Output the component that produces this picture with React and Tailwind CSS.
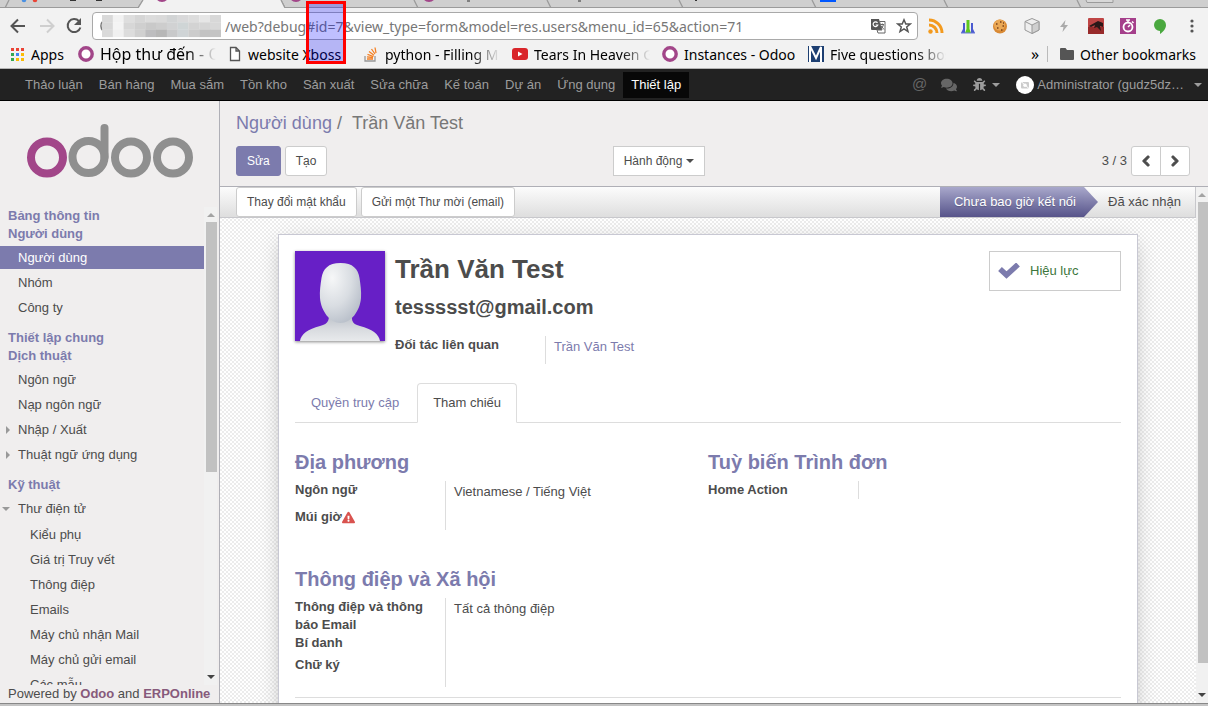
import React, { useState } from 'react';
import clsx from 'clsx';
import { FaBug, FaComments, FaExclamationTriangle, FaChevronLeft, FaChevronRight } from 'react-icons/fa';

const NAV_ITEMS = ['Thảo luận', 'Bán hàng', 'Mua sắm', 'Tồn kho', 'Sản xuất', 'Sửa chữa', 'Kế toán', 'Dự án', 'Ứng dụng', 'Thiết lập'];

const MENU = [
    { title: 'Bảng thông tin', items: [] },
    { title: 'Người dùng', items: [{ label: 'Người dùng', active: true }, { label: 'Nhóm' }, { label: 'Công ty' }] },
    { title: 'Thiết lập chung', items: [] },
    {
        title: 'Dịch thuật',
        items: [{ label: 'Ngôn ngữ' }, { label: 'Nạp ngôn ngữ' }, { label: 'Nhập / Xuất', toggle: 'closed' }, { label: 'Thuật ngữ ứng dụng', toggle: 'closed' }],
    },
    {
        title: 'Kỹ thuật',
        items: [
            {
                label: 'Thư điện tử',
                toggle: 'open',
                children: ['Kiểu phụ', 'Giá trị Truy vết', 'Thông điệp', 'Emails', 'Máy chủ nhận Mail', 'Máy chủ gửi email', 'Các mẫu'],
            },
        ],
    },
];

const MOSAIC = [
    ['#d9d9d9', '#f2f2f2', '#dedede', '#d6d6d6', '#dcdcdc', '#dadada', '#d2d4d5', '#d9d9da', '#dddddd', '#e6e6e6', '#d8d8d8'],
    ['#d8d8d8', '#f4f4f4', '#d7d7d7', '#cfcfcf', '#c9c9c9', '#cdcdcd', '#d1d2d3', '#cfd5d6', '#d3d3d3', '#d5d5d5', '#d8d8d8'],
    ['#dadada', '#f0f0f0', '#dcdcdc', '#d0d0d0', '#bdbdbf', '#b7b7b7', '#c8c9ca', '#cfd4d6', '#cccccc', '#c3c3c3', '#c4c4c4'],
];

function TabStrip() {
    return (
        <svg className="block h-2 w-full shrink-0" viewBox="0 0 1208 8" preserveAspectRatio="none" aria-hidden="true">
            <rect width="1208" height="8" fill="#cfcfcf" />
            <path d="M0 7.5H138L143 0H281L285 7.5H1208" fill="none" stroke="#9b9b9b" />
            <path d="M138 8L143 0H281L285 8Z" fill="#f2f2f2" />
            <path d="M5 8L9 0M138 8L143 0M281 0L285 8M414 0L418 8M547 0L551 8M679 0L683 8M812 0L816 8M944 0L948 8M1077 0L1081 8" fill="none" stroke="#9b9b9b" strokeWidth="1.3" />
            <circle cx="24" cy="0" r="2.3" fill="#4a90e2" />
            <circle cx="35" cy="0" r="2.3" fill="#ea4335" />
            <circle cx="162" cy="-5" r="7" fill="#a24689" />
            <circle cx="296" cy="-5" r="7" fill="#a24689" />
            <circle cx="429" cy="-5" r="7" fill="#a24689" />
            <path d="M70 .5H76M96 .5H102M467 1H470M578 1H581M695 .5H697" stroke="#333" />
            <rect x="820" width="16" height="2" fill="#0057ff" />
            <path d="M1086 0L1087 2.5H1113V0" fill="#d8d8d8" stroke="#9b9b9b" />
        </svg>
    );
}

function OdooRing() {
    return (
        <svg className="size-4 shrink-0" viewBox="0 0 16 16">
            <circle cx="8" cy="8" r="6.2" fill="#fff" stroke="#a24689" strokeWidth="3.4" />
        </svg>
    );
}

function AddressBar() {
    return (
        <div className="flex h-9 items-center pr-2 pl-2">
            <div className="flex w-21 shrink-0 items-center gap-3">
                <button aria-label="Back">
                    <svg className="size-5" viewBox="0 0 20 20" fill="none" stroke="#555" strokeWidth="2"><path d="M17 10H4M10 3.5L3.5 10L10 16.5" /></svg>
                </button>
                <button aria-label="Forward">
                    <svg className="size-5" viewBox="0 0 20 20" fill="none" stroke="#cfcfcf" strokeWidth="2"><path d="M0 10H13M7 3.5L13.500 10L7 16.500" /></svg>
                </button>
                <button aria-label="Reload" className="-ml-2">
                    <svg className="size-5" viewBox="0 0 20 20" fill="none" stroke="#555" strokeWidth="2">
                        <path d="M15 5.200A6.500 6.500 0 1 0 16.400 11.500" />
                        <path d="M17 2V9H10Z" fill="#555" stroke="none" />
                    </svg>
                </button>
            </div>
            <div className="flex h-7 min-w-0 flex-1 items-center rounded-sm border border-[#a9a9a9] bg-white pr-1.5">
                <svg className="h-6 w-32 shrink-0" viewBox="0 0 128 24">
                    <path d="M10 7A7 7 0 0 0 10 17" fill="none" stroke="#777" strokeWidth="1.5" />
                    {MOSAIC.map((row, y) =>
                        row.map((color, x) => <rect key={x + '-' + y} x={9 + x * 10.8} y={1 + y * 7.3} width="11" height="7.500" fill={color} />)
                    )}
                </svg>
                <input
                    aria-label="Address"
                    className="min-w-0 flex-1 bg-transparent pl-1 font-['Noto_Sans',sans-serif] text-[14px] text-[#777] outline-none"
                    defaultValue="/web?debug#id=7&view_type=form&model=res.users&menu_id=65&action=71"
                />
                <button aria-label="Translate" className="mr-2.5">
                    <svg className="size-4" viewBox="0 0 16 16">
                        <path d="M1 1H9L12 12H2A1 1 0 0 1 1 11Z" fill="#555" />
                        <path d="M9.500 3.500H15V15H8L7 12H12Z" fill="#fff" stroke="#666" />
                        <path d="M7.500 4.800A2.400 2.400 0 1 0 7.800 7H5.600" fill="none" stroke="#fff" strokeWidth="1.200" />
                        <path d="M10.500 6.500H14M12.300 5.500V6.500M13.500 6.500Q13 9.500 10.500 11M11.200 8L14 11.500" fill="none" stroke="#666" />
                    </svg>
                </button>
                <button aria-label="Bookmark" className="-mr-px">
                    <svg className="size-4" viewBox="0 0 16 16" fill="none" stroke="#555" strokeWidth="1.500">
                        <path d="M8 1.800L9.800 6H14.300L10.700 8.900L12 13.600L8 10.900L4 13.600L5.300 8.900L1.700 6H6.200Z" />
                    </svg>
                </button>
            </div>
            <Extensions />
        </div>
    );
}

function Extensions() {
    return (
        <div className="flex shrink-0 items-center gap-4 pl-2.5">
            <svg className="size-4" viewBox="0 0 16 16" fill="none" stroke="#f39a1e" strokeWidth="3">
                <circle cx="2.500" cy="13.500" r="2.200" fill="#f39a1e" stroke="none" />
                <path d="M1 7A8 8 0 0 1 9 15M1 2A13 13 0 0 1 14 15" />
            </svg>
            <svg className="size-4" viewBox="0 0 16 16">
                <path d="M1 15L3 11V5H5V15ZM11 15V5H13V11L15 15Z" fill="#4a5ad0" />
                <path d="M5 15L6.500 11V2H9.500V11L11 15Z" fill="#5fc81e" />
                <path d="M1 15H15" stroke="#6a78d8" />
            </svg>
            <svg className="size-4" viewBox="0 0 16 16">
                <circle cx="8" cy="8.500" r="7" fill="#d98a35" />
                <circle cx="7.500" cy="7" r="5.500" fill="#eaa855" />
                <path d="M4 6H5.500M8 4H9.500M10.500 8H12M5 10H6.500M9 12H10.500M11 5H12" stroke="#7a4018" strokeWidth="1.500" />
            </svg>
            <svg className="size-4" viewBox="0 0 16 16" stroke="#999" strokeLinejoin="round">
                <path d="M8 .5L15 3.500V12L8 15.500L1 12V3.500Z" fill="#eee" />
                <path d="M8 7L15 3.500V12L8 15.500Z" fill="#cfcfcf" />
                <path d="M1 3.500L8 7" fill="none" />
            </svg>
            <svg className="size-4" viewBox="0 0 16 16"><path d="M9.500 2L4 9H7.500L6.500 14L12 7H8.500Z" fill="#aaa" /></svg>
            <svg className="size-4" viewBox="0 0 16 16">
                <rect width="16" height="16" rx="1" fill="#bf4545" />
                <rect y="9" width="16" height="7" fill="#982b2b" />
                <path d="M1 8L10 3L15 5V9L12 8L13 13L9 9L6 10L7 7L3 9Z" fill="#2b1818" />
            </svg>
            <svg className="size-4" viewBox="0 0 16 16">
                <rect width="16" height="16" fill="#a5408b" />
                <circle cx="8" cy="9" r="4.500" fill="none" stroke="#fff" strokeWidth="1.800" />
                <path d="M6 2H10M8 2V4M12 3.500L13.500 5M8 9L10 7" stroke="#fff" strokeWidth="1.500" />
            </svg>
            <svg className="size-4" viewBox="0 0 16 16"><path d="M8 1A6 6 0 0 1 14 7C14 11 11 14 8 16V13A6 6 0 0 1 8 1Z" fill="#4aa83f" /></svg>
            <button aria-label="Menu">
                <svg className="size-4" viewBox="0 0 16 16" fill="#555">
                    <circle cx="8" cy="3" r="1.600" /><circle cx="8" cy="8" r="1.600" /><circle cx="8" cy="13" r="1.600" />
                </svg>
            </button>
        </div>
    );
}

function Bookmark({ icon, label, className, fade }) {
    return (
        <a href="#" className={clsx('flex shrink-0 items-center gap-1.5', className)}>
            {icon}
            <span className={clsx('overflow-hidden whitespace-nowrap', fade && 'mask-r-from-75%')}>{label}</span>
        </a>
    );
}

function BookmarksBar() {
    return (
        <div className="flex h-[25px] items-center border-b border-[#b5b5b5] pr-3 pb-1 pl-[9px] font-['Noto_Sans',sans-serif] text-[14px] text-black">
            <Bookmark
                className="w-[69px]"
                label="Apps"
                icon={
                    <svg className="size-4 shrink-0" viewBox="0 0 16 16">
                        {['#ea4335', '#ea4335', '#ea4335', '#34a853', '#4285f4', '#fbbc05', '#34a853', '#fbbc05', '#fbbc05'].map((c, i) => (
                            <rect key={i} x={2 + (i % 3) * 5} y={2 + Math.floor(i / 3) * 5} width="3" height="3" fill={c} />
                        ))}
                    </svg>
                }
            />
            <Bookmark className="w-[138px] text-[16px]" fade label="Hộp thư đến - Odoo" icon={<OdooRing />} />
            <Bookmark
                className="mx-3 w-[123px]"
                label="website Xboss"
                icon={
                    <svg className="h-4 w-3.5 shrink-0" viewBox="0 0 14 16" fill="#fff" stroke="#555" strokeWidth="1.300">
                        <path d="M2.500 1.500H8L11.500 5V14.500H2.500ZM8 1.500V5H11.500" />
                    </svg>
                }
            />
            <Bookmark
                className="w-[137px]"
                fade
                label="python - Filling Missing"
                icon={
                    <svg className="size-4 shrink-0" viewBox="0 0 16 16" fill="none">
                        <path d="M2 10V15H12V10" stroke="#999" strokeWidth="1.300" />
                        <path d="M4 13H10M4 10.800L10 11.500M4.500 8.300L10.500 10.500M6 5.500L11 9.300M8.500 3L12 8M12 1.500L13 7" stroke="#f48024" strokeWidth="1.300" />
                    </svg>
                }
            />
            <Bookmark
                className="ml-3 w-[138px]"
                fade
                label="Tears In Heaven Guitar"
                icon={
                    <svg className="size-4 shrink-0" viewBox="0 0 16 16">
                        <rect y="2" width="16" height="12" rx="3" fill="#d9252a" />
                        <path d="M6 5.500V10.500L10.500 8Z" fill="#fff" />
                    </svg>
                }
            />
            <Bookmark className="ml-3 w-[136px]" label="Instances - Odoo" icon={<OdooRing />} />
            <Bookmark
                className="ml-2.5 w-[138px]"
                fade
                label="Five questions bosses"
                icon={
                    <svg className="size-4 shrink-0" viewBox="0 0 16 16">
                        <rect width="16" height="16" fill="#1d3f72" />
                        <path d="M2 16V0L8 12L13 1V16" fill="none" stroke="#fff" strokeWidth="2" />
                    </svg>
                }
            />
            <button className="ml-auto text-[16px]" aria-label="More bookmarks">»</button>
            <div className="mr-3 ml-2 h-4 w-px bg-[#bbb]" />
            <Bookmark
                label="Other bookmarks"
                icon={<svg className="h-4 w-3.5 shrink-0" viewBox="0 0 14 16"><path d="M0 3Q0 2 1 2H5.500L7 4H13Q14 4 14 5V13Q14 14 13 14H1Q0 14 0 13Z" fill="#555" /></svg>}
            />
        </div>
    );
}

function Navbar() {
    return (
        <nav className="flex h-8 shrink-0 items-center border-b border-black bg-[#222] pr-1.5 pl-[17px] text-[13px] text-[#9d9d9d]">
            {NAV_ITEMS.map((item) => (
                <a
                    key={item}
                    href="#"
                    className={clsx('px-2 py-1 leading-[18px] whitespace-nowrap', item === 'Thiết lập' && 'bg-[#080808] text-white')}
                >
                    {item}
                </a>
            ))}
            <div className="ml-auto flex items-center">
                <a href="#" className="mr-3.5 text-[15px] text-[#666]" aria-label="Mentions">@</a>
                <a href="#" className="mr-4 text-[#666]" aria-label="Messages"><FaComments size={16} /></a>
                <a href="#" className="mr-4 flex items-center gap-1.5" aria-label="Debug">
                    <FaBug size={13} />
                    <Caret />
                </a>
                <a href="#" className="flex items-center">
                    <svg className="mr-[3px] size-4.5" viewBox="0 0 18 18">
                        <circle cx="9" cy="9" r="9" fill="#fff" />
                        <rect x="5" y="6" width="8" height="6.500" rx="1" fill="#ccc" />
                        <circle cx="9" cy="9.200" r="1.800" fill="#fff" />
                        <path d="M5 5.500L13 12.500" stroke="#fff" />
                    </svg>
                    <span className="mr-2.5">Administrator (gudz5dz…</span>
                    <Caret />
                </a>
            </div>
        </nav>
    );
}

function Caret() {
    return <span className="inline-block border-x-4 border-t-4 border-x-transparent border-t-current" />;
}

function OdooLogo() {
    return (
        <svg className="mx-auto mt-[23px] mb-[29px] h-[54px] w-[166px] shrink-0" viewBox="0 0 166 54" fill="none" strokeWidth="8">
            <circle cx="20" cy="33.500" r="16" stroke="#a24689" />
            <circle cx="61.500" cy="33" r="16" stroke="#8f8f8f" />
            <path d="M77.500 4V33" stroke="#8f8f8f" strokeLinecap="round" />
            <circle cx="104" cy="33.500" r="16" stroke="#8f8f8f" />
            <circle cx="146" cy="33.500" r="16" stroke="#8f8f8f" />
        </svg>
    );
}

function MenuItem({ item }) {
    return (
        <li>
            <a
                href="#"
                className={clsx('relative block h-[23px] pl-[18px] leading-[23px]', item.active && 'bg-[#7c7bad] text-white')}
            >
                {item.toggle === 'closed' && <span className="absolute top-2 left-1.5 border-y-4 border-l-4 border-y-transparent border-l-[#999]" />}
                {item.toggle === 'open' && <span className="absolute top-2.5 left-0.5 border-x-4 border-t-4 border-x-transparent border-t-[#999]" />}
                {item.label}
            </a>
            {item.children && (
                <ul className="mt-[3px] space-y-0.5">
                    {item.children.map((child) => (
                        <li key={child}>
                            <a href="#" className="block h-[23px] pl-[30px] leading-[23px]">{child}</a>
                        </li>
                    ))}
                </ul>
            )}
        </li>
    );
}

function Scrollbar({ thumb, className }) {
    return (
        <div className={clsx('flex shrink-0 flex-col items-center bg-[#f1f1f1]', className)} aria-hidden="true">
            <div className="flex h-[15px] shrink-0 items-center">
                <span className="border-x-4 border-b-4 border-x-transparent border-b-[#a3a3a3]" />
            </div>
            <div className="min-h-0 w-full flex-1 pl-0.5">
                <div className={clsx('w-full bg-[#c1c1c1]', thumb)} />
            </div>
            <div className="flex h-4 shrink-0 items-center">
                <span className="border-x-4 border-t-4 border-x-transparent border-t-[#444]" />
            </div>
        </div>
    );
}

function Sidebar() {
    return (
        <aside className="flex w-[220px] shrink-0 flex-col border-r border-[#afafb6] bg-[#f0eeee]">
            <OdooLogo />
            <div className="flex min-h-0 flex-1 overflow-hidden pr-0.5">
                <div className="min-w-0 flex-1 overflow-hidden">
                    {MENU.map((section) => (
                        <section key={section.title}>
                            <h2 className="pl-2 leading-[18px] font-bold text-[#7c7bad]">{section.title}</h2>
                            {section.items.length > 0 && (
                                <ul className="mt-[3px] mb-2.5 space-y-0.5">
                                    {section.items.map((item) => <MenuItem key={item.label} item={item} />)}
                                </ul>
                            )}
                        </section>
                    ))}
                </div>
                <Scrollbar className="w-[13px]" thumb="h-[56%]" />
            </div>
            <footer className="pl-2 leading-[18px] whitespace-nowrap">
                Powered by <a href="#" className="font-bold text-[#875a7b]">Odoo</a> and <a href="#" className="font-bold text-[#875a7b]">ERPOnline</a>
            </footer>
        </aside>
    );
}

function Button({ primary, className, children, ...props }) {
    return (
        <button
            className={clsx(
                'h-[30px] border text-[12px] whitespace-nowrap',
                primary ? 'border-[#7c7bad] bg-[#7c7bad] text-white' : 'border-[#ccc] bg-white',
                className || 'rounded-[3px] px-2.5'
            )}
            {...props}
        >
            {children}
        </button>
    );
}

function ControlPanel() {
    return (
        <header className="shrink-0 border-b border-[#afafb6] bg-[#f0eeee] px-4 pt-2.5 pb-2.5">
            <div className="flex h-6 items-center text-[18px] whitespace-pre text-[#777]">
                <a href="#" className="text-[#7c7bad]">Người dùng</a>
                <span> /  </span>
                <span>Trần Văn Test</span>
            </div>
            <div className="mt-[11px] flex items-center">
                <div className="flex w-[39.4%] gap-1">
                    <Button primary>Sửa</Button>
                    <Button>Tạo</Button>
                </div>
                <Button className="flex items-center gap-1 px-2.5">
                    Hành động <Caret />
                </Button>
                <div className="mr-0.5 ml-auto flex items-center">
                    <span className="mr-1">3 / 3</span>
                    <Button aria-label="Previous" className="rounded-l-[3px] px-2"><FaChevronLeft size={12} strokeWidth={50} stroke="currentColor" /></Button>
                    <Button aria-label="Next" className="-ml-px rounded-r-[3px] px-2"><FaChevronRight size={12} strokeWidth={50} stroke="currentColor" /></Button>
                </div>
            </div>
        </header>
    );
}

function StatusBar() {
    return (
        <div className="flex h-[31px] items-center border-r border-b border-[#c8c8cc] bg-linear-to-b from-[#fcfcfc] to-[#dedede] pl-4">
            <div className="flex gap-1">
                <Button>Thay đổi mật khẩu</Button>
                <Button>Gửi một Thư mời (email)</Button>
            </div>
            <ul className="ml-auto flex h-full items-center">
                <li className="flex h-full text-white">
                    <span className="flex items-center bg-linear-to-b from-[#a9a8cb] to-[#57548a] pr-2 pl-3.5 text-shadow-xs">Chưa bao giờ kết nối</span>
                    <svg className="h-full w-3.5" viewBox="0 0 14 30" preserveAspectRatio="none">
                        <defs>
                            <linearGradient id="arrow" gradientUnits="userSpaceOnUse" x1="0" y1="0" x2="0" y2="30">
                                <stop offset="0" stopColor="#a9a8cb" />
                                <stop offset="1" stopColor="#57548a" />
                            </linearGradient>
                        </defs>
                        <path d="M0 0L14 15L0 30Z" fill="url(#arrow)" />
                    </svg>
                </li>
                <li className="pr-3.5 pl-2.5">Đã xác nhận</li>
            </ul>
        </div>
    );
}

function Avatar() {
    return (
        <svg className="size-[90px] shrink-0 shadow-[0_1px_3px_#888]" viewBox="0 0 90 90" role="img" aria-label="Avatar">
            <defs>
                <radialGradient id="face" cx=".3" cy=".25" r=".85">
                    <stop offset="0" stopColor="#f6f7f8" />
                    <stop offset=".55" stopColor="#d9dde2" />
                    <stop offset="1" stopColor="#b5bcc7" />
                </radialGradient>
                <linearGradient id="torso" x1="0" y1="0" x2="0" y2="1">
                    <stop offset="0" stopColor="#b4bac3" />
                    <stop offset=".6" stopColor="#d8dbdf" />
                    <stop offset="1" stopColor="#e8eaec" />
                </linearGradient>
            </defs>
            <rect width="90" height="90" fill="#671fc6" />
            <path d="M33 60C35 68 34 73 25 75C13 78 6 83 5 90H85C84 83 77 78 65 75C56 73 56 68 58 60Z" fill="url(#torso)" />
            <path d="M45.500 12C58 12 63 18 64.500 27C65.500 34 66.500 40 66 47C65 60 56 72 45.500 72C35 72 26 60 25 47C24.500 40 25.500 34 26.500 27C28 18 33 12 45.500 12Z" fill="url(#face)" />
        </svg>
    );
}

function Notebook() {
    const [active, setActive] = useState('Tham chiếu');
    return (
        <div role="tablist" className="mt-[19px] flex border-b border-[#ddd]">
            {['Quyền truy cập', 'Tham chiếu'].map((tab) => (
                <button
                    key={tab}
                    role="tab"
                    aria-selected={tab === active}
                    onClick={() => setActive(tab)}
                    className={clsx(
                        '-mb-px mr-0.5 h-10 rounded-t border px-[15px]',
                        tab === active ? 'border-[#ddd] border-b-white bg-white' : 'border-transparent text-[#7c7bad]'
                    )}
                >
                    {tab}
                </button>
            ))}
        </div>
    );
}

function Group({ title, className, labels, children }) {
    return (
        <section className="w-1/2">
            <h2 className="mb-[7px] text-[20px] leading-6 font-bold text-[#7c7bad]">{title}</h2>
            <div className={clsx('flex', className)}>
                <div className="w-[151px] shrink-0 border-r border-[#ddd] pr-2 leading-[18px] font-bold">{labels}</div>
                <div className="pt-0.5 pl-2 leading-[18px]">{children}</div>
            </div>
        </section>
    );
}

function Sheet() {
    return (
        <div className="mx-auto mt-4 w-full max-w-[860px] border border-[#c8c8d3] bg-white px-4 pt-4 pb-10 shadow-[0_5px_20px_-5px_#aaa]">
            <div className="flex items-start">
                <Avatar />
                <div className="ml-2.5">
                    <h1 className="text-[26px] leading-9 font-bold">Trần Văn Test</h1>
                    <h3 className="mt-2 text-[20px] leading-6 font-bold">tessssst@gmail.com</h3>
                    <div className="mt-[17px] flex h-7">
                        <div className="w-[151px] border-r border-[#ddd] leading-[18px] font-bold">Đối tác liên quan</div>
                        <a href="#" className="pt-0.5 pl-2 leading-[18px] text-[#7c7bad]">Trần Văn Test</a>
                    </div>
                </div>
                <button className="ml-auto flex h-10 w-[132px] items-center gap-2.5 border border-[#ccc] pl-2 text-[#3c763d]">
                    <svg className="h-4 w-[22px]" viewBox="0 0 22 16" fill="none" stroke="#7c7bad" strokeWidth="5.500">
                        <path d="M2 6L8.500 12L20 1.500" />
                    </svg>
                    Hiệu lực
                </button>
            </div>
            <Notebook />
            <div className="mt-[27px] flex">
                <Group title="Địa phương" className="h-[49px]" labels={
                    <>
                        <div>Ngôn ngữ</div>
                        <div className="mt-[9px] flex items-center">Múi giờ<FaExclamationTriangle size={13} color="#d9534f" /></div>
                    </>
                }>
                    Vietnamese / Tiếng Việt
                </Group>
                <Group title="Tuỳ biến Trình đơn" className="h-[18px]" labels="Home Action" />
            </div>
            <div className="mt-[37px] flex border-b border-[#ddd] pb-2.5">
                <Group title="Thông điệp và Xã hội" className="h-[89px]" labels={
                    <>
                        <div>Thông điệp và thông báo Email</div>
                        <div>Bí danh</div>
                        <div className="mt-1">Chữ ký</div>
                    </>
                }>
                    Tất cả thông điệp
                </Group>
            </div>
        </div>
    );
}

export default function App() {
    return (
        <div className="relative flex h-screen flex-col overflow-hidden bg-[#f2f2f2] font-['Liberation_Sans',Arial,sans-serif] text-[13px] text-[#4c4c4c]">
            <TabStrip />
            <AddressBar />
            <BookmarksBar />
            <Navbar />
            <div className="flex min-h-0 flex-1">
                <Sidebar />
                <main className="flex min-w-0 flex-1 flex-col">
                    <ControlPanel />
                    <div className="flex min-h-0 flex-1">
                        <div className="min-w-0 flex-1 overflow-hidden bg-white bg-[conic-gradient(#ececec_25%,transparent_0_50%,#ececec_0_75%,transparent_0)] bg-size-[4px_4px]">
                            <StatusBar />
                            <Sheet />
                        </div>
                        <Scrollbar className="w-3" thumb="h-[95%]" />
                    </div>
                </main>
            </div>
            <div className="h-[3px] shrink-0 border-t border-[#888] bg-[#c4c4c4]" />
            {/* Highlight over the record id in the address */}
            <div className="pointer-events-none absolute top-px left-[306px] h-[63px] w-10 border-3 border-[#ff0000] bg-[#0000ff]/25" />
        </div>
    );
}
